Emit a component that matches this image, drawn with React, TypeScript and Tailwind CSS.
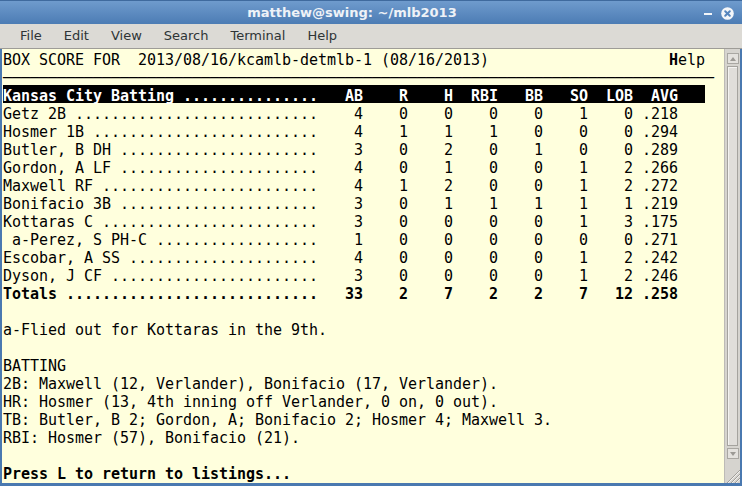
import type {ReactNode} from 'react'

type Batter = {name: string; stats: number[]; avg: string}

const batters: Batter[] = [
  {name: 'Getz 2B', stats: [4, 0, 0, 0, 0, 1, 0], avg: '.218'},
  {name: 'Hosmer 1B', stats: [4, 1, 1, 1, 0, 0, 0], avg: '.294'},
  {name: 'Butler, B DH', stats: [3, 0, 2, 0, 1, 0, 0], avg: '.289'},
  {name: 'Gordon, A LF', stats: [4, 0, 1, 0, 0, 1, 2], avg: '.266'},
  {name: 'Maxwell RF', stats: [4, 1, 2, 0, 0, 1, 2], avg: '.272'},
  {name: 'Bonifacio 3B', stats: [3, 0, 1, 1, 1, 1, 1], avg: '.219'},
  {name: 'Kottaras C', stats: [3, 0, 0, 0, 0, 1, 3], avg: '.175'},
  {name: ' a-Perez, S PH-C', stats: [1, 0, 0, 0, 0, 0, 0], avg: '.271'},
  {name: 'Escobar, A SS', stats: [4, 0, 0, 0, 0, 1, 2], avg: '.242'},
  {name: 'Dyson, J CF', stats: [3, 0, 0, 0, 0, 1, 2], avg: '.246'},
]

const totals: Batter = {name: 'Totals', stats: [33, 2, 7, 2, 2, 7, 12], avg: '.258'}

function statLine(name: string, cols: (string | number)[], avg: string) {
  const left = (name + ' ').padEnd(35, '.')
  return left + cols.map((c) => String(c).padStart(5)).join('') + avg.padStart(5)
}

const menus = ['File', 'Edit', 'View', 'Search', 'Terminal', 'Help']

function Line(props: {children?: ReactNode; className?: string}) {
  return (
    <div className={`h-[18px] leading-[22px] whitespace-pre ${props.className ?? ''}`}>
      {props.children ?? ' '}
    </div>
  )
}

function Scrollbar() {
  return (
    <div className="w-[16px] flex flex-col items-center bg-[#d6d4cf] border-l border-[#bdbbb6]">
      <div className="mt-[4px] h-[11px] w-[12px] border border-[#a9a7a2] bg-[#e4e2de] flex items-center justify-center">
        <svg width="6" height="4" viewBox="0 0 6 4">
          <path d="M0 4 L3 0 L6 4 Z" fill="#9c9a95" />
        </svg>
      </div>
      <div className="mt-[2px] flex-1 w-[11px] border border-[#a5a39e] bg-[#e0deda] shadow-[inset_1px_1px_0_#f4f3f1]" />
      <div className="mt-[2px] h-[11px] w-[12px] border border-[#a9a7a2] bg-[#e4e2de] flex items-center justify-center">
        <svg width="6" height="4" viewBox="0 0 6 4">
          <path d="M0 0 L3 4 L6 0 Z" fill="#9c9a95" />
        </svg>
      </div>
      <div className="h-[24px] w-full flex items-end justify-end">
        <svg width="15" height="15" viewBox="0 0 15 15">
          <g stroke="#a09e99" strokeWidth="1">
            <line x1="15" y1="2" x2="2" y2="15" />
            <line x1="15" y1="6" x2="6" y2="15" />
            <line x1="15" y1="10" x2="10" y2="15" />
          </g>
          <g stroke="#f2f1ef" strokeWidth="1">
            <line x1="15" y1="3" x2="3" y2="15" />
            <line x1="15" y1="7" x2="7" y2="15" />
            <line x1="15" y1="11" x2="11" y2="15" />
          </g>
        </svg>
      </div>
    </div>
  )
}

export default function App() {
  const header = statLine('Kansas City Batting', ['AB', 'R', 'H', 'RBI', 'BB', 'SO', 'LOB'], 'AVG').padEnd(78)

  return (
    <div className="w-[742px] h-[486px] flex flex-col overflow-hidden bg-[#4a79b0]">
      {/* title bar */}
      <div className="h-[24px] flex bg-gradient-to-b from-[#6f9bcd] to-[#4c7cb4] border-t border-[#3f6a9e]">
        <div className="flex-1 flex items-center justify-center pt-[1px] font-['DejaVu_Sans',sans-serif] font-bold text-[13px] text-[#eef2f7]">
          matthew@swing: ~/mlb2013
        </div>
        <div className="w-[38px] flex items-center gap-[9px] pt-[1px]">
          <div className="w-[8px] h-[2px] bg-[#f2f5f9] mt-[1px]" />
          <svg width="13" height="13" viewBox="0 0 13 13">
            <circle cx="6.5" cy="6.5" r="6.3" fill="#f4f6f9" />
            <g stroke="#5585bd" strokeWidth="2" strokeLinecap="round">
              <line x1="4.2" y1="4.2" x2="8.8" y2="8.8" />
              <line x1="8.8" y1="4.2" x2="4.2" y2="8.8" />
            </g>
          </svg>
        </div>
      </div>

      {/* menu bar */}
      <div className="h-[25px] flex items-center gap-[22px] pl-[20px] bg-[#dcdad5] border-b border-[#9e9c97] font-['DejaVu_Sans',sans-serif] text-[13px] text-[#2e3436]">
        {menus.map((m) => (
          <span key={m}>{m}</span>
        ))}
      </div>

      {/* terminal */}
      <div className="flex-1 flex ml-[2px] mr-[2px] mb-[3px] bg-[#ffffdd]">
        <div className="flex-1 pl-[1px] font-['DejaVu_Sans_Mono',monospace] text-[15px] tracking-[-0.03px] text-black overflow-hidden">
          <Line>
            {'BOX SCORE FOR  2013/08/16/kcamlb-detmlb-1 (08/16/2013)'.padEnd(74)}
            <b>H</b>elp
          </Line>
          <Line>{'─'.repeat(79)}</Line>
          <Line className="w-fit bg-black text-white font-bold">{header}</Line>
          {batters.map((b) => (
            <Line key={b.name}>{statLine(b.name, b.stats, b.avg)}</Line>
          ))}
          <Line className="font-bold">{statLine(totals.name, totals.stats, totals.avg)}</Line>
          <Line />
          <Line>a-Flied out for Kottaras in the 9th.</Line>
          <Line />
          <Line>BATTING</Line>
          <Line>2B: Maxwell (12, Verlander), Bonifacio (17, Verlander).</Line>
          <Line>HR: Hosmer (13, 4th inning off Verlander, 0 on, 0 out).</Line>
          <Line>TB: Butler, B 2; Gordon, A; Bonifacio 2; Hosmer 4; Maxwell 3.</Line>
          <Line>RBI: Hosmer (57), Bonifacio (21).</Line>
          <Line />
          <Line className="font-bold">Press L to return to listings...</Line>
        </div>
        <Scrollbar />
      </div>
    </div>
  )
}
